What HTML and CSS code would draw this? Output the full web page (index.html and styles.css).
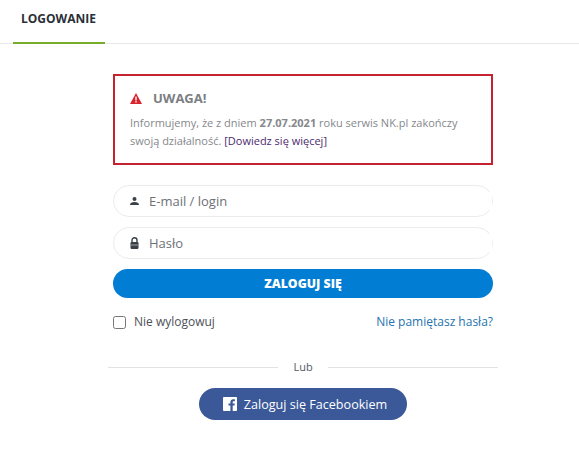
FILE: index.html
```html
<!DOCTYPE html>
<html lang="pl">
<head>
    <meta charset="UTF-8">
    <meta name="viewport" content="width=device-width, initial-scale=1.0">
    <title>Logowanie</title>
    <link rel="stylesheet" href="styles.css">
</head>
<body>
    <div class="tabs">
        <a class="tab" href="#">LOGOWANIE</a>
    </div>

    <div class="container">
        <div class="notice">
            <h3 class="notice-title">
                <svg class="notice-icon" width="12" height="11" viewBox="0 0 12 11">
                    <path fill="#d9232e" d="M6 0 12 11H0Z"/>
                    <rect x="5.3" y="3.6" width="1.4" height="3.8" fill="#fff"/>
                    <rect x="5.3" y="8.2" width="1.4" height="1.4" fill="#fff"/>
                </svg>
                UWAGA!
            </h3>
            <p>Informujemy, że z dniem <b>27.07.2021</b> roku serwis NK.pl zakończy swoją działalność. <a href="#">[Dowiedz się więcej]</a></p>
        </div>

        <form class="login-form">
            <label class="field">
                <svg width="9" height="8" viewBox="0 0 9 8">
                    <circle cx="4.5" cy="2" r="2" fill="#3a4048"/>
                    <path fill="#3a4048" d="M0 8C0 5.800 2 5 4.500 5S9 5.800 9 8Z"/>
                </svg>
                <input type="text" placeholder="E-mail / login">
            </label>
            <label class="field">
                <svg width="9" height="12" viewBox="0 0 9 12">
                    <path fill="none" stroke="#3a4048" stroke-width="1.400" d="M2 6V3.200a2.500 2.500 0 0 1 5 0V6"/>
                    <rect x="0.500" y="5" width="8" height="7" rx="1.200" fill="#3a4048"/>
                    <rect x="0.500" y="7.500" width="8" height="1" fill="#9da0a4"/>
                </svg>
                <input type="password" placeholder="Hasło">
            </label>
            <button class="btn-login" type="button">ZALOGUJ SIĘ</button>
            <div class="form-row">
                <label class="remember"><input type="checkbox"> Nie wylogowuj</label>
                <a class="forgot" href="#">Nie pamiętasz hasła?</a>
            </div>
        </form>

        <div class="divider"><span>Lub</span></div>

        <button class="btn-facebook" type="button">
            <svg width="14" height="14" viewBox="0 0 14 14">
                <path fill="#fff" d="M.8 0h12.400c.4 0 .8.4.8.8v12.400c0 .4-.4.8-.8.8H9.700V8.600h1.800l.3-2.100H9.700V5.200c0-.6.2-1 1-1h1.200V2.300c-.2 0-.9-.1-1.700-.1-1.700 0-2.800 1-2.800 2.900v1.400H5.500v2.100h1.900V14H.8c-.4 0-.8-.4-.8-.8V.8C0 .4.4 0 .8 0Z"/>
            </svg>
            Zaloguj się Facebookiem
        </button>
    </div>
</body>
</html>
```

FILE: styles.css
```css
body {
    margin: 0;
    font-family: "Open Sans", sans-serif;
    font-size: 12px;
    color: #3a4048;
    background-color: #fff;
}

a {
    text-decoration: none;
}

.tabs {
    display: flex;
    height: 44px;
    padding-left: 13px;
    border-bottom: 1px solid #e8e8e8;
    box-sizing: border-box;
}

.tab {
    width: 92px;
    height: 44px;
    box-sizing: border-box;
    padding: 11px 0 0 8px;
    border-bottom: 2px solid #76ad2a;
    font-size: 12px;
    font-weight: 700;
    line-height: 16px;
    color: #2b2f36;
}

.container {
    display: flex;
    flex-direction: column;
    align-items: center;
    padding-top: 30px;
    padding-left: 27px;
}

.notice {
    width: 380px;
    height: 91px;
    box-sizing: border-box;
    padding: 13px 15px 0;
    border: 2px solid #c4232f;
    color: #85888c;
}

.notice-title {
    display: flex;
    align-items: center;
    gap: 11px;
    margin: 0 0 7px;
    font-size: 13px;
    line-height: 18px;
    font-weight: 700;
    color: #7b7e83;
}

.notice p {
    margin: 0;
    font-size: 11px;
    line-height: 18px;
}

.notice p a {
    color: #4d2a6e;
}

.login-form {
    width: 380px;
    margin-top: 20px;
}

.field {
    display: flex;
    align-items: center;
    gap: 10px;
    height: 32px;
    box-sizing: border-box;
    margin-bottom: 10px;
    padding-left: 16px;
    border: 1px solid #ececec;
    border-radius: 16px;
}

.field svg {
    flex: none;
}

.field input {
    flex: 1;
    min-width: 0;
    border: 0;
    outline: 0;
    padding: 0;
    font-family: inherit;
    font-size: 13px;
    color: #3a4048;
}

.field input::placeholder {
    color: #6d7177;
    opacity: 1;
}

.btn-login {
    display: block;
    width: 100%;
    height: 29px;
    border: 0;
    border-radius: 15px;
    background-color: #027dd4;
    color: #fff;
    font-family: inherit;
    font-size: 12.3px;
    font-weight: 800;
    cursor: pointer;
}

.form-row {
    display: flex;
    justify-content: space-between;
    align-items: center;
    margin-top: 15px;
    line-height: 18px;
}

.remember {
    display: flex;
    align-items: center;
    gap: 8px;
    color: #4d5157;
}

.remember input {
    width: 13px;
    height: 13px;
    margin: 0;
}

.forgot {
    color: #2673ad;
}

.divider {
    display: flex;
    align-items: center;
    gap: 15px;
    width: 390px;
    margin-top: 28px;
    font-size: 11px;
    line-height: 16px;
    color: #55595f;
}

.divider::before,
.divider::after {
    content: "";
    flex: 1;
    height: 1px;
    background-color: #e2e2e2;
}

.btn-facebook {
    display: flex;
    align-items: center;
    justify-content: center;
    gap: 7px;
    width: 208px;
    height: 32px;
    margin-top: 13px;
    padding: 0 0 0 4px;
    border: 0;
    border-radius: 16px;
    background-color: #3b5998;
    color: #fff;
    font-family: inherit;
    font-size: 12.6px;
    cursor: pointer;
}
```
